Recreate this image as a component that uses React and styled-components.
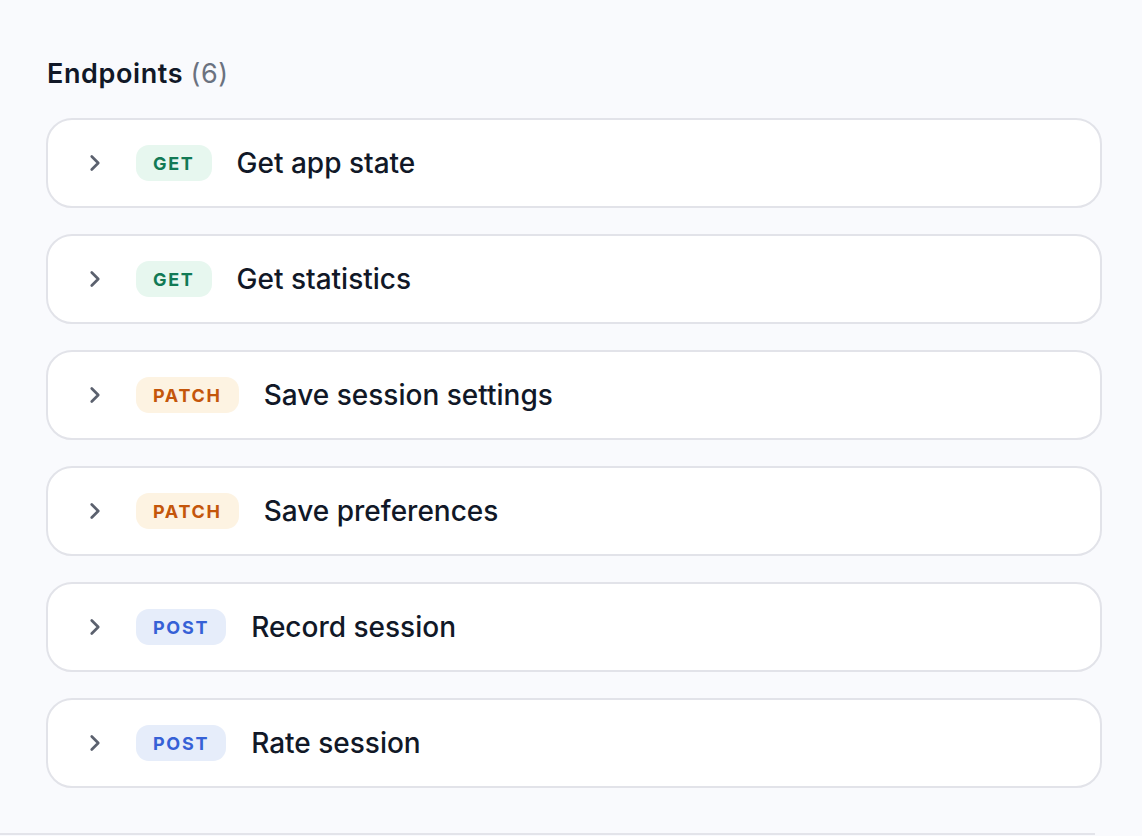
import styled, { createGlobalStyle } from 'styled-components'
import { ChevronRight } from 'lucide-react'

const GlobalStyle = createGlobalStyle`
    html, body {
        margin: 0;
        padding: 0;
        background-color: #f9fafd;
        font-family: Inter, "Noto Sans", sans-serif;
        color: #111827;
    }
`

const Section = styled.section`
    width: 1095px;
    padding: 57px 0 45px 0;
    border-bottom: 2px solid #e3e4ea;
`

const Inner = styled.div`
    margin-left: 46px;
    width: 1056px;
`

const Heading = styled.h2`
    margin: 0 0 27px 1px;
    font-size: 27px;
    font-weight: 600;
    letter-spacing: 0.6px;
    line-height: 34px;
    color: #111827;
`

const Count = styled.span`
    font-weight: 400;
    color: #6b7280;
`

const List = styled.div`
    display: flex;
    flex-direction: column;
    gap: 26px;
`

const Card = styled.div`
    display: flex;
    align-items: center;
    height: 86px;
    padding: 0 0 0 34px;
    background-color: #fff;
    border: 2px solid #e2e3e9;
    border-radius: 26px;
    cursor: pointer;
`

const Chevron = styled(ChevronRight)`
    color: #5b616e;
    flex-shrink: 0;
`

const Badge = styled.span`
    display: inline-flex;
    align-items: center;
    justify-content: center;
    height: 36px;
    padding: 0 17px;
    margin-left: 28px;
    border-radius: 13px;
    font-size: 18px;
    font-weight: 700;
    letter-spacing: 1.7px;
    color: ${p => p.$fg};
    background-color: ${p => p.$bg};
`

const Title = styled.span`
    margin-left: 25px;
    font-size: 28px;
    font-weight: 500;
    color: #111827;
`

const methods = {
    GET: { fg: '#127a55', bg: '#e7f7ef' },
    PATCH: { fg: '#c4560b', bg: '#fdf3e2' },
    POST: { fg: '#3661d6', bg: '#e6edfa' },
}

const endpoints = [
    { method: 'GET', title: 'Get app state' },
    { method: 'GET', title: 'Get statistics' },
    { method: 'PATCH', title: 'Save session settings' },
    { method: 'PATCH', title: 'Save preferences' },
    { method: 'POST', title: 'Record session' },
    { method: 'POST', title: 'Rate session' },
]

function App() {
  return (
    <>
      <GlobalStyle />
      <Section>
        <Inner>
          <Heading>Endpoints <Count>(6)</Count></Heading>
          <List>
            {endpoints.map((e, i) => (
              <Card key={i}>
                <Chevron size={26} strokeWidth={2.5} />
                <Badge $fg={methods[e.method].fg} $bg={methods[e.method].bg}>{e.method}</Badge>
                <Title>{e.title}</Title>
              </Card>
            ))}
          </List>
        </Inner>
      </Section>
    </>
  )
}

export default App
